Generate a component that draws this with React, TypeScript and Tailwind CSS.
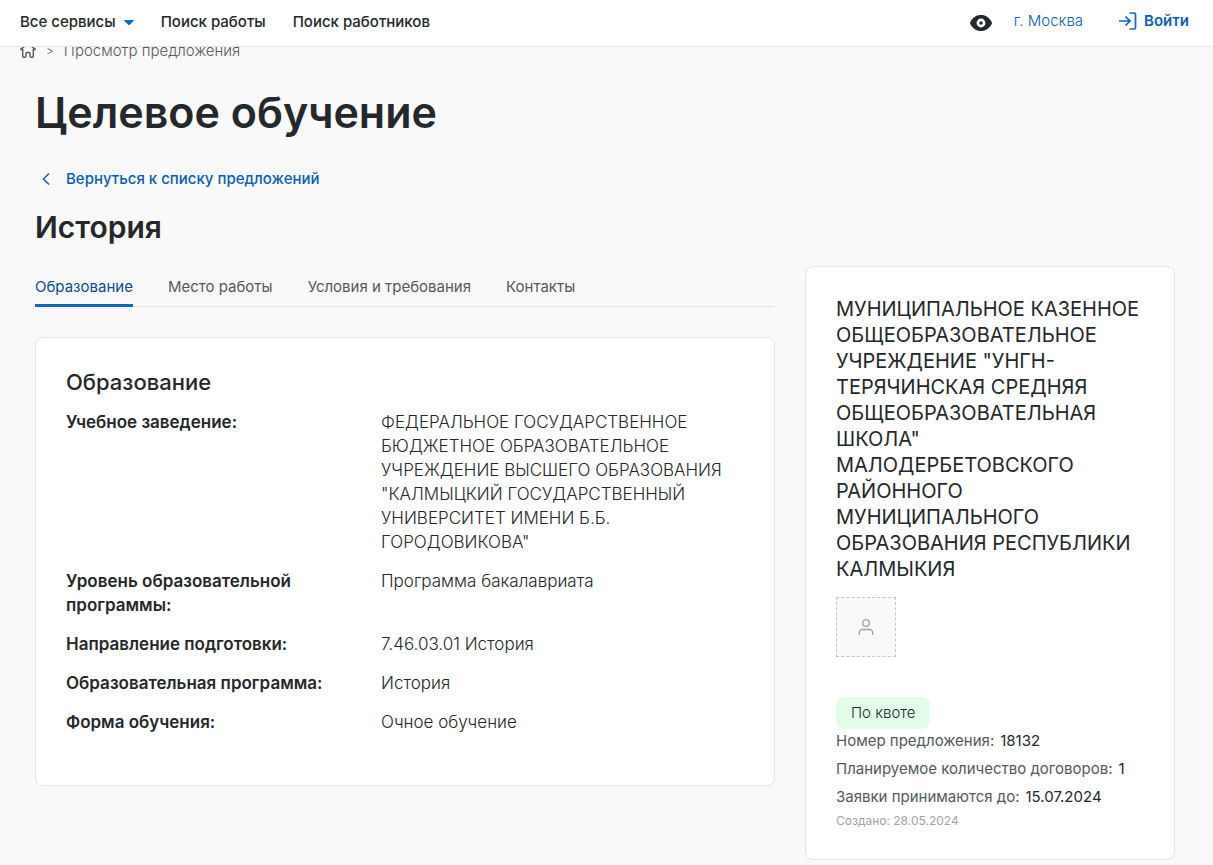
import React, { useState } from 'react';

interface DetailRow {
  label: string;
  value: string[];
}

const tabs = ['Образование', 'Место работы', 'Условия и требования', 'Контакты'];

const details: DetailRow[] = [
  {
    label: 'Учебное заведение:',
    value: [
      'ФЕДЕРАЛЬНОЕ ГОСУДАРСТВЕННОЕ',
      'БЮДЖЕТНОЕ ОБРАЗОВАТЕЛЬНОЕ',
      'УЧРЕЖДЕНИЕ ВЫСШЕГО ОБРАЗОВАНИЯ',
      '"КАЛМЫЦКИЙ ГОСУДАРСТВЕННЫЙ',
      'УНИВЕРСИТЕТ ИМЕНИ Б.Б.',
      'ГОРОДОВИКОВА"',
    ],
  },
  { label: 'Уровень образовательной программы:', value: ['Программа бакалавриата'] },
  { label: 'Направление подготовки:', value: ['7.46.03.01 История'] },
  { label: 'Образовательная программа:', value: ['История'] },
  { label: 'Форма обучения:', value: ['Очное обучение'] },
];

const employer = [
  'МУНИЦИПАЛЬНОЕ КАЗЕННОЕ',
  'ОБЩЕОБРАЗОВАТЕЛЬНОЕ',
  'УЧРЕЖДЕНИЕ "УНГН-',
  'ТЕРЯЧИНСКАЯ СРЕДНЯЯ',
  'ОБЩЕОБРАЗОВАТЕЛЬНАЯ',
  'ШКОЛА"',
  'МАЛОДЕРБЕТОВСКОГО',
  'РАЙОННОГО',
  'МУНИЦИПАЛЬНОГО',
  'ОБРАЗОВАНИЯ РЕСПУБЛИКИ',
  'КАЛМЫКИЯ',
];

const facts = [
  { label: 'Номер предложения:', value: '18132' },
  { label: 'Планируемое количество договоров:', value: '1' },
  { label: 'Заявки принимаются до:', value: '15.07.2024' },
];

const Header: React.FC = () => (
  <header className="fixed inset-x-0 top-0 z-10 flex h-[47px] items-center justify-between border-b border-[#e4e5e7] bg-white pr-6 pl-5 text-[15px] leading-5">
    <nav className="flex items-center gap-[27px] pb-[2px] font-medium">
      <button type="button" className="flex items-center gap-2">
        Все сервисы
        <svg className="h-[5px] w-[10px] text-[#0d69bd]" viewBox="0 0 10 5" fill="currentColor">
          <path d="M.5 0h9c.5 0 .6.5.3.8L5.7 4.7a1 1 0 0 1-1.4 0L.2.8C-.1.5 0 0 .5 0Z" />
        </svg>
      </button>
      <a href="#jobs">Поиск работы</a>
      <a href="#workers">Поиск работников</a>
    </nav>
    <div className="flex items-center text-[#0d5cb6]">
      <button type="button" aria-label="Версия для слабовидящих" className="mr-[22px] text-[#25282b]">
        <svg className="h-4 w-[22px]" viewBox="0 0 22 16" fill="currentColor">
          <path fillRule="evenodd" d="M11 0c4.700 0 8.700 2.700 10.800 7.300.2.500.2.900 0 1.400C19.700 13.300 15.700 16 11 16S2.300 13.300.2 8.700a1.700 1.700 0 0 1 0-1.400C2.300 2.700 6.300 0 11 0Zm0 3.600a4.400 4.400 0 1 0 0 8.800 4.400 4.400 0 0 0 0-8.800Zm0 2.600a1.800 1.800 0 1 1 0 3.600 1.800 1.800 0 0 1 0-3.600Z" />
        </svg>
      </button>
      <button type="button" className="mr-9 pb-1 font-light">г. Москва</button>
      <a href="#login" className="flex items-center gap-[7px] pb-1 font-semibold">
        <svg className="h-[18px] w-[18px]" viewBox="0 0 18 18" fill="none" stroke="#0d69bd" strokeWidth="1.700">
          <path d="M0 9h11M6.500 4.500 11 9l-4.500 4.500M10.500 1H15a1.500 1.500 0 0 1 1.500 1.500v13A1.500 1.500 0 0 1 15 17h-4.500" />
        </svg>
        Войти
      </a>
    </div>
  </header>
);

const App: React.FC = () => {
  const [activeTab, setActiveTab] = useState(0);

  return (
    <div className="min-h-screen bg-[#f9f9f9] font-['Inter','Noto_Sans',sans-serif] text-[#25282b]">
      <Header />

      <nav className="flex items-center px-5 pt-[41px] text-[15px] leading-5 font-light text-[#54595e]">
        <a href="#home" aria-label="Главная">
          {/* roof with eaves, walls and an open doorway */}
          <svg className="h-4 w-4" viewBox="0 0 16 16" fill="none" stroke="currentColor" strokeWidth="1.400">
            <path d="M.3 6.500 8 1l7.700 5.500M.3 6.500h2.400v6.700a1 1 0 0 0 1 1h1.200a1 1 0 0 0 1-1V10.500a1 1 0 0 1 1-1h2.200a1 1 0 0 1 1 1v2.700a1 1 0 0 0 1 1h1.200a1 1 0 0 0 1-1V6.500h2.400" />
          </svg>
        </a>
        <span className="mx-[10px] text-xs">&gt;</span>
        <span>Просмотр предложения</span>
      </nav>

      <main className="pr-[38px] pb-[5px] pl-[35px]">
        <h1 className="pt-[25px] text-[43px] leading-[52px] font-semibold">Целевое обучение</h1>
        <a href="#offers" className="mt-[31px] flex items-center gap-4 pl-[7px] text-[15px] leading-5 font-medium text-[#0d5cb6]">
          <svg className="h-3 w-2" viewBox="0 0 8 12" fill="none" stroke="currentColor" strokeWidth="1.500">
            <path d="M7 .5 1.500 6 7 11.500" />
          </svg>
          Вернуться к списку предложений
        </a>
        <h2 className="mt-5 text-[30px] leading-9 font-semibold">История</h2>

        <div className="mt-[21px] grid grid-cols-[2fr_1fr] items-start gap-[30px]">
          <div>
            <div role="tablist" className="flex gap-[35px] border-b border-[#e4e5e7] text-[15px] leading-5">
              {tabs.map((tab, index) => (
                <button
                  key={tab}
                  type="button"
                  role="tab"
                  aria-selected={activeTab === index}
                  onClick={() => setActiveTab(index)}
                  className={`-mb-px rounded-t-xs border-b-3 pt-[11px] pb-[7px] ${
                    activeTab === index ? 'border-[#0d69bd] text-[#0d4d97]' : 'border-transparent text-[#54595e]'
                  }`}
                >
                  {tab}
                </button>
              ))}
            </div>

            <section className="mt-[30px] rounded-lg border border-[#e4e5e7] bg-white px-[30px] pt-[30px] pb-[51px]">
              <h3 className="mb-[14px] text-[22px] leading-7 font-medium">Образование</h3>
              <dl className="grid gap-[15px] text-[17px] leading-6">
                {details.map((row) => (
                  <div key={row.label} className="grid grid-cols-[285px_1fr] gap-[30px]">
                    <dt className="font-semibold">{row.label}</dt>
                    <dd className="font-light">
                      {row.value.map((line) => (
                        <span key={line} className="block whitespace-nowrap">{line}</span>
                      ))}
                    </dd>
                  </div>
                ))}
              </dl>
            </section>
          </div>

          <aside className="rounded-lg border border-[#e4e5e7] bg-white px-[30px] pt-[29px] pb-[29px]">
            <p className="text-xl leading-[26px]">
              {employer.map((line) => (
                <span key={line} className="block whitespace-nowrap">{line}</span>
              ))}
            </p>
            <div className="mt-[15px] mb-10 flex size-[60px] items-center justify-center border border-dashed border-[#c4c6c9] bg-[#f9f9f9]">
              <svg className="h-4 w-4" viewBox="0 0 16 16" fill="none" stroke="#a0a3a8" strokeWidth="1.300">
                <circle cx="8" cy="4" r="3.300" />
                <path d="M1.300 16v-2.500a3 3 0 0 1 3-3h7.400a3 3 0 0 1 3 3V16" />
              </svg>
            </div>
            <span className="inline-block rounded-lg bg-[#e3fdea] px-[15px] py-[6px] align-top text-[15px] leading-5 font-light">По квоте</span>
            <dl className="grid gap-2 pt-[2px] text-[15px] leading-5">
              {facts.map((fact) => (
                <div key={fact.label} className="flex gap-[6px]">
                  <dt className="text-[#54595e]">{fact.label}</dt>
                  <dd>{fact.value}</dd>
                </div>
              ))}
            </dl>
            <p className="mt-[5px] text-xs leading-[18px] text-[#a0a3a8]">Создано: 28.05.2024</p>
          </aside>
        </div>
      </main>
    </div>
  );
};

export default App;
